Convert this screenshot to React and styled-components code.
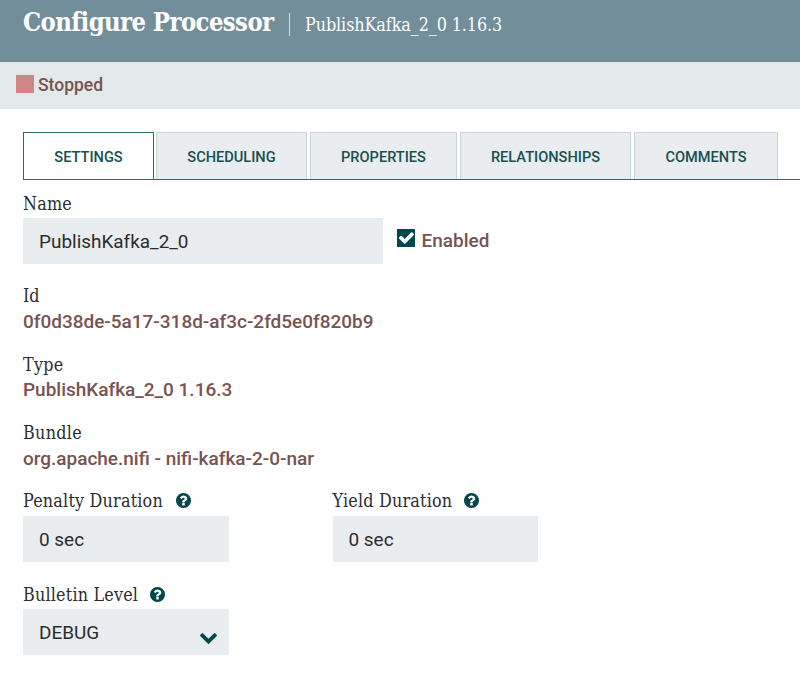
import React from "react";
import styled, { createGlobalStyle } from "styled-components";

const GlobalStyle = createGlobalStyle`
  * { box-sizing: border-box; }
  body { margin: 0; background: #fff; font-family: Roboto, sans-serif; color: #2c2c2e; }
`;

const slab = `"Roboto Slab", "DejaVu Serif Condensed", "DejaVu Serif", serif`;

const Dialog = styled.div`
  height: 677px;
  overflow: hidden;
  background: #fff;
`;

const Header = styled.header`
  height: 62px;
  padding: 7px 0 0 23px;
  display: flex;
  align-items: flex-start;
  background: #728e9b;
  color: #fff;
  font-family: ${slab};
  font-stretch: condensed;
  white-space: nowrap;
`;

const Title = styled.h1`
  margin: 0;
  width: 265px;
  font-size: 25.4px;
  line-height: 30px;
  font-weight: 700;
  letter-spacing: -0.58px;
`;

const Divider = styled.span`
  width: 1px;
  height: 23px;
  margin: 6px 15px 0 1px;
  background: #d3dde1;
`;

const Subtitle = styled.span`
  font-size: 17.8px;
  line-height: 35px;
  letter-spacing: -0.08px;
`;

const StatusBar = styled.div`
  height: 46.5px;
  padding: 0 0 1px 16px;
  display: flex;
  align-items: center;
  gap: 4px;
  background: #e3e8eb;
  color: #775351;
  font-size: 17.5px;
  font-weight: 500;
`;

const StopSquare = styled.span`
  width: 18px;
  height: 18px;
  margin-bottom: 2px;
  background: #d18686;
`;

const Tabs = styled.nav`
  height: 48px;
  margin: 23.5px 0 0 23px;
  display: flex;
  border-bottom: 1px solid #2f6b6b;
`;

const Tab = styled.button`
  width: ${(p) => p.$width}px;
  height: ${(p) => (p.$active ? 48 : 47)}px;
  margin: 0 ${(p) => (p.$active ? 2 : 3)}px 0 0;
  padding: 1px 0 0;
  border: 1px solid ${(p) => (p.$active ? "#2f6b6b" : "#c7d6d9")};
  border-bottom: ${(p) => (p.$active ? "1px solid #2f6b6b" : "0")};
  background: ${(p) => (p.$active ? "#fff" : "#e9edf0")};
  color: #17504f;
  font: 500 14.6px Roboto, sans-serif;
`;

const Form = styled.main`
  padding: 12px 0 0 23px;
`;

const Label = styled.div`
  height: ${(p) => p.$height || 26}px;
  padding-bottom: ${(p) => p.$lift || 0}px;
  display: flex;
  align-items: center;
  font-family: ${slab};
  font-stretch: condensed;
  font-size: 17.8px;
  line-height: 23px;
  white-space: nowrap;
  letter-spacing: ${(p) => p.$track ?? 0.2}px;
`;

const LabelText = styled.span`
  width: ${(p) => p.$width}px;
`;

const Field = styled.div`
  width: ${(p) => p.$width}px;
  height: 46px;
  padding: 0 12px 0 16px;
  display: flex;
  align-items: center;
  justify-content: space-between;
  background: #e9edf0;
  font-size: 18.95px;
`;

const NameRow = styled.div`
  display: flex;
  align-items: center;
`;

const Checkbox = styled.span`
  width: 18px;
  height: 18px;
  margin: 0 6.5px 6px 14px;
  display: flex;
  align-items: center;
  justify-content: center;
  background: #004849;
`;

const Value = styled.div`
  height: 26px;
  color: #775351;
  font-size: 18.98px;
  line-height: 26px;
  font-weight: 500;
`;

const Fact = styled.section`
  height: 68.6px;
`;

const Facts = styled.div`
  padding-top: 18.5px;
  height: 224px;
`;

const Durations = styled.div`
  display: grid;
  grid-template-columns: 309.5px 206px;
  margin-bottom: 19px;
`;

const Glyph = styled.svg`
  display: block;
  flex: none;
  fill: ${(p) => p.$color || "#004849"};
`;

const ChevronBox = styled.span`
  padding-top: 13px;
`;

const Help = () => (
  <Glyph width="15" height="15" viewBox="128 128 1536 1536">
    <path d="M1024 1376v-192q0-14-9-23t-23-9h-192q-14 0-23 9t-9 23v192q0 14 9 23t23 9h192q14 0 23-9t9-23zm256-672q0-88-55.5-163t-138.5-116-170-41q-243 0-371 213-15 24 8 42l132 100q7 6 19 6 16 0 25-12 53-68 86-92 34-24 86-24 48 0 85.5 26t37.5 59q0 38-20 61t-68 45q-63 28-115.5 86.5t-52.5 125.5v36q0 14 9 23t23 9h192q14 0 23-9t9-23q0-19 21.5-49.5t54.5-49.5q32-18 49-28.5t46-35 44.5-48 28-60.5 12.5-81zm384 192q0 209-103 385.5t-279.5 279.5-385.5 103-385.5-103-279.5-279.5-103-385.5 103-385.5 279.5-279.5 385.5-103 385.5 103 279.5 279.5 103 385.5z" />
  </Glyph>
);

const Check = () => (
  <Glyph $color="#fff" width="15" height="12" viewBox="121 334 1550 1188">
    <path d="M1671 566q0 40-28 68l-724 724-136 136q-28 28-68 28t-68-28l-136-136-362-362q-28-28-28-68t28-68l136-136q28-28 68-28t68 28l294 295 656-657q28-28 68-28t68 28l136 136q28 28 28 68z" />
  </Glyph>
);

const Chevron = () => (
  <Glyph width="17" height="11" viewBox="90 533 1612 1035">
    <path d="M1683 808l-742 741q-19 19-45 19t-45-19l-742-741q-19-19-19-45.5t19-45.5l166-165q19-19 45-19t45 19l531 531 531-531q19-19 45-19t45 19l166 165q19 19 19 45.5t-19 45.5z" />
  </Glyph>
);

const tabs = [
  ["SETTINGS", 131],
  ["SCHEDULING", 151],
  ["PROPERTIES", 147],
  ["RELATIONSHIPS", 171],
  ["COMMENTS", 144],
];

const facts = [
  ["Id", "0f0d38de-5a17-318d-af3c-2fd5e0f820b9", 0],
  ["Type", "PublishKafka_2_0 1.16.3", 0.3],
  ["Bundle", "org.apache.nifi - nifi-kafka-2-0-nar", 0.3],
];

export default function App() {
  return (
    <Dialog>
      <GlobalStyle />
      <Header>
        <Title>Configure Processor</Title>
        <Divider />
        <Subtitle>PublishKafka_2_0 1.16.3</Subtitle>
      </Header>
      <StatusBar>
        <StopSquare />
        Stopped
      </StatusBar>
      <Tabs>
        {tabs.map(([name, width], i) => (
          <Tab key={name} $width={width} $active={i === 0}>{name}</Tab>
        ))}
      </Tabs>
      <Form>
        <Label $lift={3}>Name</Label>
        <NameRow>
          <Field $width={360}>PublishKafka_2_0</Field>
          <Checkbox><Check /></Checkbox>
          <Value>Enabled</Value>
        </NameRow>
        <Facts>
          {facts.map(([label, value, track]) => (
            <Fact key={label}>
              <Label $track={track}>{label}</Label>
              <Value>{value}</Value>
            </Fact>
          ))}
        </Facts>
        <Durations>
          <div>
            <Label $height={28} $lift={3}><LabelText $width={152.5}>Penalty Duration</LabelText><Help /></Label>
            <Field $width={206}>0 sec</Field>
          </div>
          <div>
            <Label $height={28} $lift={3}><LabelText $width={131.5}>Yield Duration</LabelText><Help /></Label>
            <Field $width={205}>0 sec</Field>
          </div>
        </Durations>
        <Label $height={28} $lift={2}><LabelText $width={126.5}>Bulletin Level</LabelText><Help /></Label>
        <Field $width={206}>
          DEBUG
          <ChevronBox><Chevron /></ChevronBox>
        </Field>
      </Form>
    </Dialog>
  );
}
